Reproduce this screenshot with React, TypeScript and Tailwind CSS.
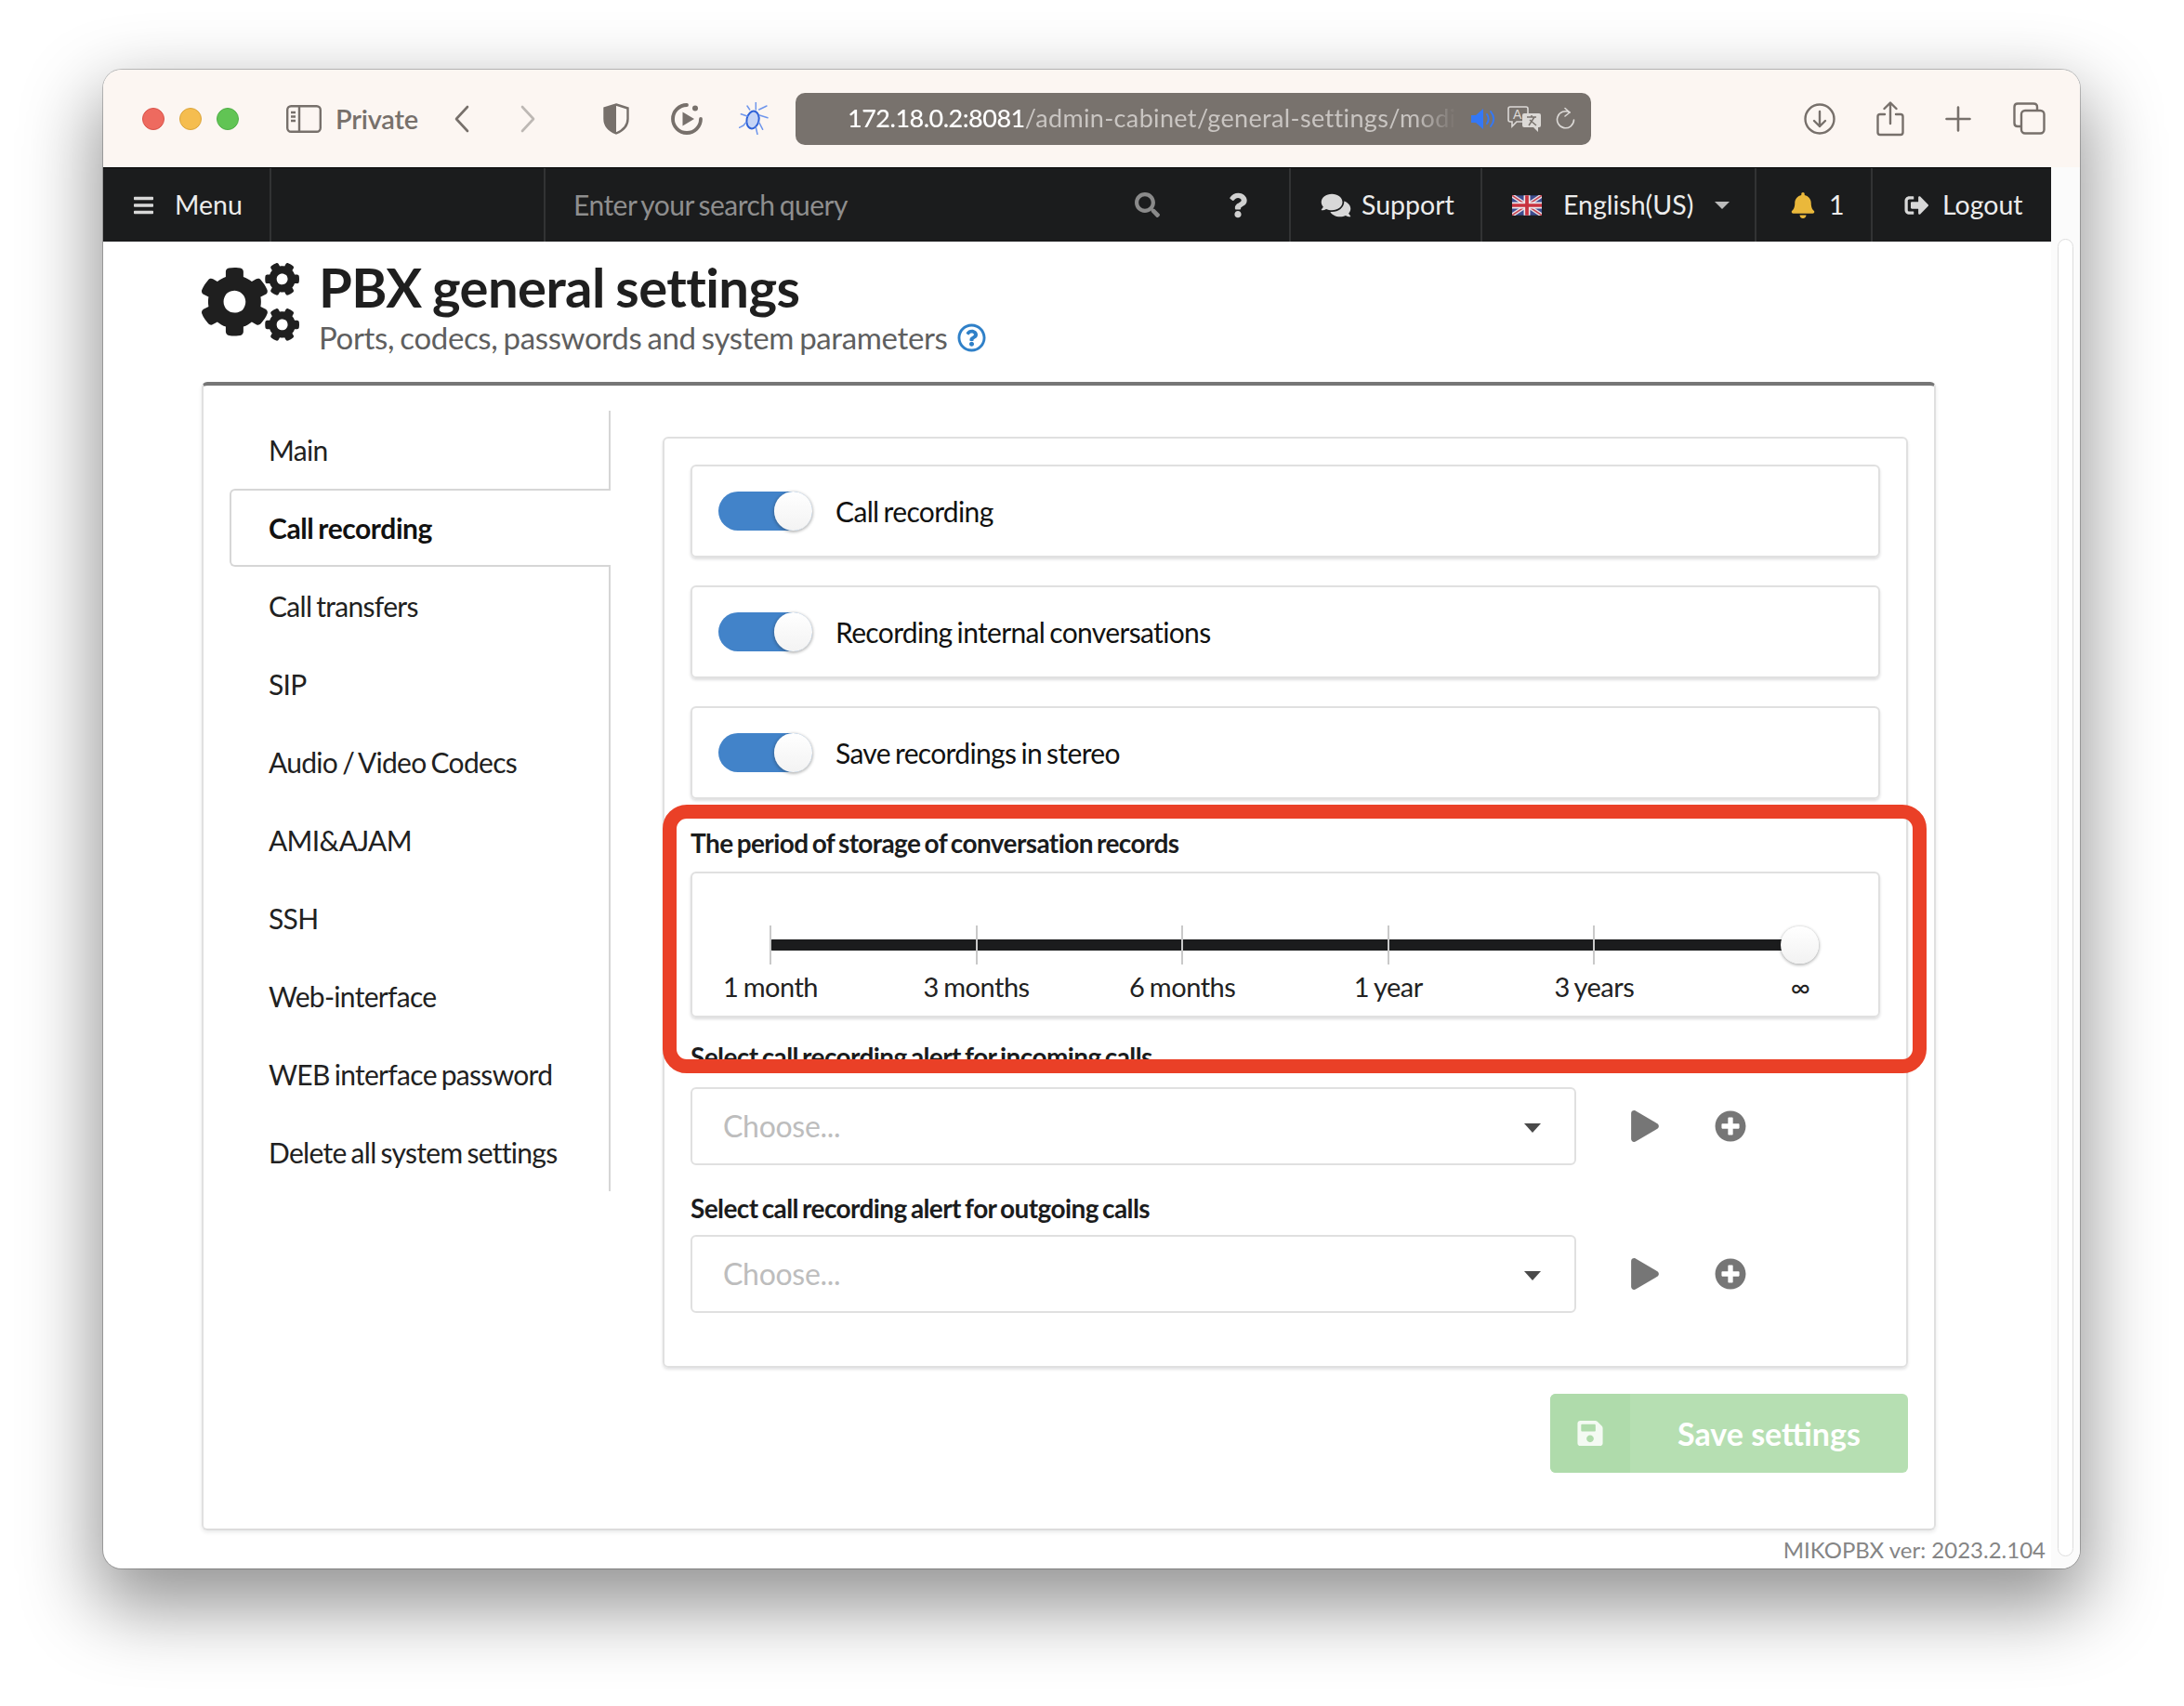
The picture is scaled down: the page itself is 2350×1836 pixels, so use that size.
import {
  FaBars,
  FaBell,
  FaCogs,
  FaComments,
  FaPlay,
  FaPlusCircle,
  FaQuestion,
  FaRegQuestionCircle,
  FaSave,
  FaSearch,
  FaSignOutAlt,
} from "react-icons/fa";

const tabs = [
  "Main",
  "Call recording",
  "Call transfers",
  "SIP",
  "Audio / Video Codecs",
  "AMI&AJAM",
  "SSH",
  "Web-interface",
  "WEB interface password",
  "Delete all system settings",
];

const toggles = ["Call recording", "Recording internal conversations", "Save recordings in stereo"];
const periods = ["1 month", "3 months", "6 months", "1 year", "3 years", "∞"];

function Flag() {
  return (
    <svg viewBox="0 0 60 40" className="h-[22px] w-[32px]">
      <rect width="60" height="40" fill="#3d4c8f" />
      <path d="M0 0L60 40M60 0L0 40" stroke="#e6dfe6" strokeWidth="8" />
      <path d="M0 0L60 40M60 0L0 40" stroke="#c8424f" strokeWidth="3" />
      <path d="M30 0V40M0 20H60" stroke="#ece6ea" strokeWidth="13" />
      <path d="M30 0V40M0 20H60" stroke="#c8323f" strokeWidth="7" />
    </svg>
  );
}

function Toggle() {
  return (
    <div className="relative h-[42px] w-[101px] shrink-0 rounded-full bg-[#4283c9]">
      <div className="absolute top-0 right-0 h-[42px] w-[41px] rounded-full bg-gradient-to-b from-white to-[#f3f3f3] shadow-[0_1px_3px_1px_rgba(34,36,38,0.3)]" />
    </div>
  );
}

function SoundSelect({ className }: { className?: string }) {
  return (
    <div className={`flex items-center ${className ?? ""}`}>
      <div className="flex h-[84px] w-[953px] items-center justify-between rounded-[6px] border-2 border-[#e0e0e0] pr-[36px] pl-[33px]">
        <span className="text-[32px] tracking-[-0.3px] text-[#bdbdbd]">Choose...</span>
        <span className="mt-[4px] h-0 w-0 border-x-[9px] border-t-[10px] border-x-transparent border-t-[#4a4a4a]" />
      </div>
      <FaPlay className="ml-[59px] h-[34px] w-[30px] text-[#767676]" />
      <FaPlusCircle className="ml-[60px] h-[34px] w-[34px] text-[#767676]" />
    </div>
  );
}

export default function App() {
  return (
    <div className="relative h-[1836px] w-[2350px] overflow-hidden bg-white pt-[75px] pl-[111px] font-['Lato',sans-serif] text-[#1b1c1d]">
      <div className="flex h-[1613px] w-[2127px] flex-col overflow-hidden rounded-[20px] bg-white shadow-[0_0_0_1px_rgba(0,0,0,0.22),0_34px_80px_8px_rgba(0,0,0,0.42)]">
        {/* safari toolbar */}
        <div className="flex h-[105px] shrink-0 items-center bg-[#fcf6f2] text-[#77706b]">
          <div className="ml-[42px] flex items-center gap-[16px]">
            <span className="h-[24px] w-[24px] rounded-full border border-[#d9534a] bg-[#ee6a5f]" />
            <span className="h-[24px] w-[24px] rounded-full border border-[#dba53c] bg-[#f5bd4f]" />
            <span className="h-[24px] w-[24px] rounded-full border border-[#4fae47] bg-[#61c454]" />
          </div>
          <svg viewBox="0 0 38 30" fill="none" stroke="currentColor" strokeWidth="2.4" className="ml-[51px] h-[30px] w-[38px]">
            <rect x="1.2" y="1.2" width="35.6" height="27.6" rx="4" />
            <path d="M14 1.5V28.5M5 8H10M5 12.5H10M5 17H10" />
          </svg>
          <span className="ml-[15px] text-[29px] font-semibold tracking-[-0.2px]">Private</span>
          <svg viewBox="0 0 16 30" fill="none" stroke="currentColor" strokeWidth="2.6" strokeLinecap="round" strokeLinejoin="round" className="ml-[39px] h-[30px] w-[16px]">
            <path d="M14 2L2 15L14 28" />
          </svg>
          <svg viewBox="0 0 16 30" fill="none" stroke="#bdb8b4" strokeWidth="2.6" strokeLinecap="round" strokeLinejoin="round" className="ml-[55px] h-[30px] w-[16px]">
            <path d="M2 2L14 15L2 28" />
          </svg>
          <svg viewBox="0 0 28 34" className="ml-[73px] h-[34px] w-[28px]">
            <path d="M14 1.5L26.5 5.5V17C26.5 25 20 30 14 32.5C8 30 1.5 25 1.5 17V5.5Z" fill="none" stroke="currentColor" strokeWidth="2.4" />
            <path d="M14 1.5V32.5C8 30 1.5 25 1.5 17V5.5Z" fill="currentColor" />
          </svg>
          <svg viewBox="0 0 38 38" fill="none" stroke="currentColor" strokeWidth="3.8" strokeLinecap="round" className="ml-[43px] h-[38px] w-[38px]">
            <path d="M19 4A15 15 0 1 0 34 19" />
            <path d="M14.5 11.5L27 19L14.5 26.5Z" fill="currentColor" stroke="none" />
            <circle cx="28" cy="7.5" r="3" fill="currentColor" stroke="none" />
          </svg>
          {/* bug badge */}
          <svg viewBox="0 0 32 35" fill="none" stroke="#6f96ec" strokeWidth="1.5" strokeLinecap="round" strokeLinejoin="round" className="ml-[37px] h-[35px] w-[32px]">
            <ellipse cx="15" cy="19" rx="6.5" ry="9.5" transform="rotate(12 15 19)" fill="#c5d4f6" stroke="#2f62d8" strokeWidth="2" />
            <path d="M18.3 8V0M11.7 8L9 4M21.7 8L30 4M9 15L2.3 12.7M22.3 14L31 16.7M7.7 21.7L5 25L0.5 27.3M21.7 21.7L25.7 29.3M18.3 27L20 34.5" />
          </svg>
          <div className="ml-[29px] flex h-[56px] w-[856px] items-center rounded-[10px] bg-[#78726d] pl-[56px] text-[27px]">
            <div className="w-[671px] shrink-0">
              <div className="w-fit whitespace-nowrap [mask-image:linear-gradient(to_right,black_93%,transparent)]">
                <span className="font-medium tracking-[-0.5px] text-white">172.18.0.2:8081</span>
                <span className="tracking-[0.35px] text-[#c9c5c2]">/admin-cabinet/general-settings/modi</span>
              </div>
            </div>
            <svg viewBox="0 0 26 24" className="h-[24px] w-[26px] shrink-0">
              <path d="M0 8H5L13 1V23L5 16H0Z" fill="#3478f6" />
              <path d="M17 7C19 10 19 14 17 17M21 4C25 9 25 15 21 20" fill="none" stroke="#3478f6" strokeWidth="2" strokeLinecap="round" />
            </svg>
            <svg viewBox="0 0 37 28" className="ml-[13px] h-[28px] w-[37px] shrink-0">
              <path d="M3 1H20Q22 1 22 3V15Q22 17 20 17H10L5 22V17H3Q1 17 1 15V3Q1 1 3 1Z" fill="none" stroke="#dcd9d6" strokeWidth="1.6" />
              <text x="6" y="14" fontSize="14" fill="#dcd9d6" fontFamily="Liberation Sans, sans-serif">A</text>
              <path d="M18 8H34Q36 8 36 10V21Q36 23 34 23H33V28L28 23H18Q16 23 16 21V10Q16 8 18 8Z" fill="#dcd9d6" />
              <path d="M21 12H31M26 10V12M23 21L29 12M24 15L31 21" fill="none" stroke="#78726d" strokeWidth="1.5" />
            </svg>
            <svg viewBox="0 0 21 26" fill="none" stroke="#dcd9d6" strokeWidth="1.6" strokeLinecap="round" strokeLinejoin="round" className="ml-[15px] h-[26px] w-[21px] shrink-0">
              <path d="M15 6A9 9 0 1 0 19.5 14" />
              <path d="M10 1.5L15 6L10 10" />
            </svg>
          </div>
          <svg viewBox="0 0 34 34" fill="none" stroke="currentColor" strokeWidth="2.4" strokeLinecap="round" strokeLinejoin="round" className="ml-[229px] h-[34px] w-[34px]">
            <circle cx="17" cy="17" r="15.5" />
            <path d="M17 9V25M11 19L17 25L23 19" />
          </svg>
          <svg viewBox="0 0 30 38" fill="none" stroke="currentColor" strokeWidth="2.4" strokeLinecap="round" strokeLinejoin="round" className="ml-[44px] h-[38px] w-[30px]">
            <path d="M9 14H4Q1.5 14 1.5 16.5V33.5Q1.5 36 4 36H26Q28.5 36 28.5 33.5V16.5Q28.5 14 26 14H21" />
            <path d="M15 24V2M8.5 8L15 1.5L21.5 8" />
          </svg>
          <svg viewBox="0 0 28 28" fill="none" stroke="currentColor" strokeWidth="2.6" strokeLinecap="round" className="ml-[44px] h-[28px] w-[28px]">
            <path d="M14 1.5V26.5M1.5 14H26.5" />
          </svg>
          <svg viewBox="0 0 35 35" fill="none" stroke="currentColor" strokeWidth="2.4" className="ml-[45px] h-[35px] w-[35px]">
            <rect x="9" y="9" width="24.5" height="24.5" rx="4" />
            <path d="M9 26H5Q1.5 26 1.5 22.5V5Q1.5 1.5 5 1.5H22Q26 1.5 26 5V9" />
          </svg>
        </div>

        <div className="flex min-h-0 flex-1">
          <div className="flex w-[2096px] shrink-0 flex-col">
            {/* top menu */}
            <div className="flex h-[80px] shrink-0 items-center border-t border-black bg-[#1b1c1d] text-[28.5px] text-[#ececec]">
              <div className="flex h-full w-[181px] items-center border-r-2 border-white/10 pl-[30px]">
                <FaBars className="h-[24px] w-[27px] text-[#d8d8d8]" />
                <span className="ml-[20px]">Menu</span>
              </div>
              <div className="h-full w-[295px] border-r-2 border-white/10" />
              <div className="flex h-full w-[802px] items-center border-r-2 border-white/10 pl-[30px] text-[#8e8e8e]">
                <span className="text-[30px] tracking-[-0.5px] [word-spacing:-2px]">Enter your search query</span>
                <FaSearch className="ml-[309px] h-[27px] w-[27px] text-[#8a8a8a]" />
                <FaQuestion className="ml-[74px] h-[28px] w-[20px] text-[#d0d0d0]" />
              </div>
              <div className="flex h-full w-[206px] items-center border-r-2 border-white/10 pl-[32px]">
                <FaComments className="h-[28px] w-[33px] text-[#d8d8d8]" />
                <span className="ml-[11px]">Support</span>
              </div>
              <div className="flex h-full w-[295px] items-center border-r-2 border-white/10 pl-[32px]">
                <Flag />
                <span className="ml-[23px]">English(US)</span>
                <span className="ml-[23px] h-0 w-0 border-x-[8px] border-t-[8px] border-x-transparent border-t-[#bbbbbb]" />
              </div>
              <div className="flex h-full w-[125px] items-center border-r-2 border-white/10 pl-[37px]">
                <FaBell className="h-[28px] w-[26px] text-[#eab83b]" />
                <span className="ml-[15px]">1</span>
              </div>
              <div className="flex h-full items-center pl-[33px]">
                <FaSignOutAlt className="h-[26px] w-[29px] text-[#d8d8d8]" />
                <span className="ml-[13px]">Logout</span>
              </div>
            </div>

            {/* page */}
            <div className="flex min-h-0 flex-1 flex-col pl-[106px]">
              <div className="flex h-[151px] shrink-0 items-start pt-[23px]">
                <FaCogs className="h-[84px] w-[105px] text-[#1f1f1f]" />
                <div className="ml-[21px]">
                  <h1 className="-mt-[10px] text-[58px] leading-[72px] font-bold tracking-[-0.6px] text-[#1f1f1f] [word-spacing:-2px]">PBX general settings</h1>
                  <div className="-mt-[2px] flex items-center text-[33px] leading-[40px] tracking-[-0.35px] text-[#5f5f5f] [word-spacing:-2px]">
                    Ports, codecs, passwords and system parameters
                    <FaRegQuestionCircle className="ml-[10px] h-[31px] w-[31px] text-[#2f80c8]" />
                  </div>
                </div>
              </div>

              <div className="flex h-[1236px] w-[1866px] shrink-0 rounded-[6px] border-x-2 border-t-4 border-b-2 border-x-[#e0e0e0] border-t-[#767676] border-b-[#dcdcdc] pt-[27px] pl-[28px] shadow-[0_2px_4px_rgba(34,36,38,0.1)]">
                <div className="h-[840px] w-[410px] shrink-0 border-r-2 border-[#d6d6d6] tracking-[-0.7px] [word-spacing:-2px]">
                  {tabs.map((tab) => (
                    <div
                      key={tab}
                      className={
                        tab === "Call recording"
                          ? "-mr-[2px] flex h-[84px] items-center rounded-l-[6px] border-y-2 border-l-2 border-[#d6d6d6] bg-white pl-[40px] text-[30px] font-bold tracking-[-0.4px] text-[#111111]"
                          : "flex h-[84px] items-center pl-[42px] text-[30px] text-[#212121]"
                      }
                    >
                      {tab}
                    </div>
                  ))}
                </div>

                <div className="ml-[56px] flex w-[1340px] flex-col pt-[28px]">
                  <div className="h-[1002px] rounded-[6px] border-2 border-[#e0e0e0] px-[28px] pt-[28px] shadow-[0_2px_3px_rgba(34,36,38,0.12)]">
                    {toggles.map((label) => (
                      <div
                        key={label}
                        className="mb-[30px] flex h-[100px] w-[1280px] items-center rounded-[6px] border-2 border-[#e0e0e0] pl-[28px] text-[30px] tracking-[-0.65px] text-[#111111] shadow-[0_2px_3px_rgba(34,36,38,0.15)] [word-spacing:-2px]"
                      >
                        <Toggle />
                        <span className="ml-[25px]">{label}</span>
                      </div>
                    ))}
                    <div className="mt-[19px] text-[28px] leading-[34px] font-bold tracking-[-0.6px] text-[#1b1c1d] [word-spacing:-2px]">
                      The period of storage of conversation records
                    </div>
                    <div className="mt-[14px] h-[157px] w-[1280px] rounded-[6px] border-2 border-[#e0e0e0] pt-[56px] shadow-[0_2px_3px_rgba(34,36,38,0.15)]">
                      <div className="relative mx-[83px] flex justify-between">
                        <div className="absolute top-[15px] right-0 left-0 h-[12px] rounded-[3px] bg-[#1b1c1d]" />
                        {periods.map((period, i) => (
                          <div key={period} className="flex w-[2px] flex-col items-center">
                            {i < 5 && <div className="z-10 h-[42px] w-[2px] shrink-0 bg-[#c9c9c9]" />}
                            {i === 5 && (
                              <div className="relative z-10 flex h-[42px] w-[41px] shrink-0 items-center">
                                <div className="h-[40px] w-[41px] rounded-full bg-gradient-to-b from-white to-[#f2f2f2] shadow-[0_1px_3px_1px_rgba(34,36,38,0.3)]" />
                              </div>
                            )}
                            <span className="mt-[7px] text-[29px] leading-[34px] tracking-[-0.5px] whitespace-nowrap text-[#222222] [word-spacing:-1.5px]">{period}</span>
                          </div>
                        ))}
                      </div>
                    </div>
                    <div className="mt-[25px] text-[28px] leading-[34px] font-bold tracking-[-0.6px] text-[#1b1c1d] [word-spacing:-2px]">
                      Select call recording alert for incoming calls
                    </div>
                    <SoundSelect className="mt-[16px]" />
                    <div className="mt-[29px] text-[28px] leading-[34px] font-bold tracking-[-0.6px] text-[#1b1c1d] [word-spacing:-2px]">
                      Select call recording alert for outgoing calls
                    </div>
                    <SoundSelect className="mt-[12px]" />
                  </div>
                  <div className="mt-[28px] flex h-[85px] w-[385px] self-end overflow-hidden rounded-[6px] bg-[#b6dfb2] font-bold text-white">
                    <div className="flex w-[86px] items-center justify-center bg-[#afdbab]">
                      <FaSave className="h-[31px] w-[30px] text-[#f4faf3]" />
                    </div>
                    <div className="flex flex-1 items-center justify-center text-[34px]">Save settings</div>
                  </div>
                </div>
              </div>

              <div className="mt-[5px] w-[1984px] text-right text-[24px] leading-[32px] text-[#858585]">MIKOPBX ver: 2023.2.104</div>
            </div>
          </div>

          {/* scrollbar gutter */}
          <div className="flex flex-1 justify-center bg-[#fbfbfb] pt-[77px] pb-[13px]">
            <div className="w-[17px] rounded-full border border-[#dddddd] bg-white" />
          </div>
        </div>
      </div>

      {/* red annotation frame */}
      <div className="absolute top-[866px] left-[713px] h-[289px] w-[1360px] rounded-[26px] border-[15px] border-[#ea4027]" />
    </div>
  );
}
